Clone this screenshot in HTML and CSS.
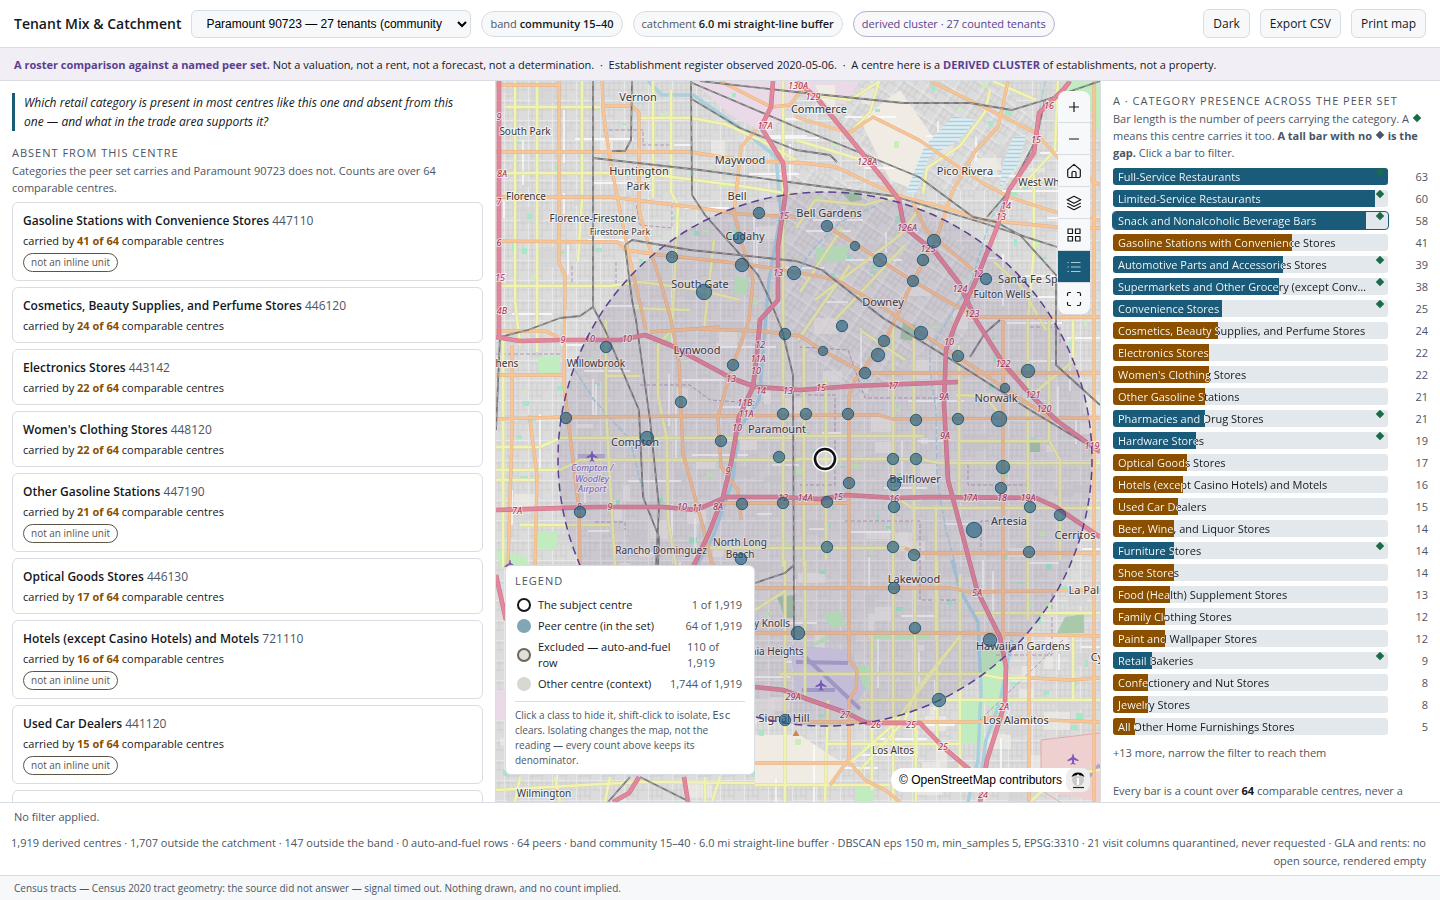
FILE: index.html
```
<!DOCTYPE html>
<html lang="en">
<head>
<meta charset="utf-8">
<title>Tenant Mix &amp; Catchment</title>
<link rel="stylesheet" href="styles.css">
</head>
<body>
<header class="topbar">
  <h1 class="title">Tenant Mix &amp; Catchment</h1>
  <select class="picker" aria-label="Subject centre"><option>Paramount 90723 — 27 tenants (community band)</option></select>
  <span class="chip">band <b>community 15–40</b></span>
  <span class="chip">catchment <b>6.0 mi straight-line buffer</b></span>
  <span class="chip chip-derived">derived cluster · 27 counted tenants</span>
  <div class="actions">
    <button class="btn" type="button">Dark</button>
    <button class="btn" type="button">Export CSV</button>
    <button class="btn" type="button">Print map</button>
  </div>
</header>
<p class="banner"><b>A roster comparison against a named peer set.</b> Not a valuation, not a rent, not a forecast, not a determination. &nbsp;·&nbsp; Establishment register observed 2020-05-06. &nbsp;·&nbsp; A centre here is a <b>DERIVED CLUSTER</b> of establishments, not a property.</p>

<main class="workspace">
  <section class="absent">
    <blockquote class="question">Which retail category is present in most centres like this one and absent from this one — and what in the trade area supports it?</blockquote>
    <h2 class="heading">ABSENT FROM THIS CENTRE</h2>
    <p class="note">Categories the peer set carries and Paramount 90723 does not. Counts are over 64 comparable centres.</p>
    <div class="cards">
      <article class="card"><h3>Gasoline Stations with Convenience Stores <span>447110</span></h3><p>carried by <b>41 of 64</b> comparable centres</p><span class="tag">not an inline unit</span></article>
      <article class="card"><h3>Cosmetics, Beauty Supplies, and Perfume Stores <span>446120</span></h3><p>carried by <b>24 of 64</b> comparable centres</p></article>
      <article class="card"><h3>Electronics Stores <span>443142</span></h3><p>carried by <b>22 of 64</b> comparable centres</p></article>
      <article class="card"><h3>Women's Clothing Stores <span>448120</span></h3><p>carried by <b>22 of 64</b> comparable centres</p></article>
      <article class="card"><h3>Other Gasoline Stations <span>447190</span></h3><p>carried by <b>21 of 64</b> comparable centres</p><span class="tag">not an inline unit</span></article>
      <article class="card"><h3>Optical Goods Stores <span>446130</span></h3><p>carried by <b>17 of 64</b> comparable centres</p></article>
      <article class="card"><h3>Hotels (except Casino Hotels) and Motels <span>721110</span></h3><p>carried by <b>16 of 64</b> comparable centres</p><span class="tag">not an inline unit</span></article>
      <article class="card"><h3>Used Car Dealers <span>441120</span></h3><p>carried by <b>15 of 64</b> comparable centres</p><span class="tag">not an inline unit</span></article>
      <article class="card"></article>
    </div>
  </section>

  <section class="map" aria-label="Map">
    <svg class="canvas" id="map" viewBox="496 81 604 721" preserveAspectRatio="xMidYMid slice"></svg>
    <div class="tools">
      <button type="button" aria-label="Zoom in"><svg viewBox="0 0 16 16"><path d="M8 3v10M3 8h10"/></svg></button>
      <button type="button" aria-label="Zoom out"><svg viewBox="0 0 16 16"><path d="M3 8h10"/></svg></button>
      <button type="button" aria-label="Home"><svg viewBox="0 0 16 16"><path d="M1.700 6.800 8 1.400l6.300 5.400V13a1.500 1.500 0 0 1-1.500 1.500H3.200A1.500 1.500 0 0 1 1.700 13zM6 14.500V9.500q0-1 1-1h2q1 0 1 1v5"/></svg></button>
      <button type="button" aria-label="Layers"><svg viewBox="0 0 16 16"><path d="M8 1.300 14.800 4.800 8 8.300 1.200 4.800zM1.200 8 8 11.500 14.800 8M1.200 11.200 8 14.700l6.800-3.500"/></svg></button>
      <button type="button" aria-label="Basemaps"><svg viewBox="0 0 16 16"><path d="M2 2h4.500v4.500H2zM9.500 2H14v4.500H9.500zM2 9.500h4.500V14H2zM9.500 9.500H14V14H9.500z"/></svg></button>
      <button type="button" aria-label="Legend" aria-pressed="true"><svg viewBox="0 0 16 16"><path d="M5 3.500h9.500M5 8h9.500M5 12.500h9.500M1.500 3.500h1.300M1.500 8h1.300M1.500 12.500h1.300"/></svg></button>
      <button type="button" aria-label="Full screen"><svg viewBox="0 0 16 16"><path d="M1.500 5V3q0-1.500 1.500-1.500h2M11 1.500h2q1.500 0 1.500 1.500v2M14.500 11v2q0 1.500-1.500 1.500h-2M5 14.500H3q-1.500 0-1.500-1.500v-2"/></svg></button>
    </div>
    <aside class="legend">
      <h2 class="heading">LEGEND</h2>
      <ul>
        <li><i class="dot subject"></i><span>The subject centre</span><em>1 of 1,919</em></li>
        <li><i class="dot peer"></i><span>Peer centre (in the set)</span><em>64 of 1,919</em></li>
        <li><i class="dot excluded"></i><span>Excluded — auto-and-fuel row</span><em class="wrap">110 of 1,919</em></li>
        <li><i class="dot other"></i><span>Other centre (context)</span><em>1,744 of 1,919</em></li>
      </ul>
      <p>Click a class to hide it, shift-click to isolate, <kbd>Esc</kbd> clears. Isolating changes the map, not the reading — every count above keeps its denominator.</p>
    </aside>
    <div class="credit"><span>© OpenStreetMap contributors</span>
      <button type="button" aria-label="Toggle attribution"><svg viewBox="0 0 24 24"><circle cx="12" cy="12" r="6" fill="#c9c9c9"/><path d="M5.500 9A7 7 0 0 1 18.500 9Q12 5 5.500 9z" fill="#000"/><path d="M12 6.500v1.800M12 10v7" stroke="#fff" stroke-width="2.200"/><path d="M7 19.500h11" stroke="#222" stroke-width="1.200"/></svg></button>
    </div>
  </section>

  <section class="presence">
    <h2 class="heading">A · CATEGORY PRESENCE ACROSS THE PEER SET</h2>
    <p class="note">Bar length is the number of peers carrying the category. A <i class="gem green"></i> means this centre carries it too. <b>A tall bar with no <i class="gem"></i> is the gap.</b> Click a bar to filter.</p>
    <ul class="bars" id="bars"></ul>
    <p class="more">+13 more, narrow the filter to reach them</p>
    <p class="foot">Every bar is a count over <b>64</b> comparable centres, never a share of sales.</p>
  </section>
</main>

<footer class="summary">
  <p>No filter applied.</p>
  <p class="facts">1,919 derived centres · 1,707 outside the catchment · 147 outside the band · 0 auto-and-fuel rows · 64 peers · band community 15–40 · 6.0 mi straight-line buffer · DBSCAN eps 150 m, min_samples 5, EPSG:3310 · 21 visit columns quarantined, never requested · GLA and rents: no open source, rendered empty</p>
</footer>
<p class="status">Census tracts — Census 2020 tract geometry: the source did not answer — signal timed out. Nothing drawn, and no count implied.</p>
<script src="app.js"></script>
</body>
</html>
```

FILE: styles.css
```
* { box-sizing: border-box; }
body {
  margin: 0; height: 100vh; display: flex; flex-direction: column; overflow: hidden;
  font: 12px/18px "Segoe UI", "Open Sans", "Noto Sans", sans-serif; color: #14181d; background: #fff;
}
h1, h2, h3, p, ul, blockquote { margin: 0; padding: 0; }
ul { list-style: none; }
b { font-weight: 600; }
button { font: inherit; color: inherit; cursor: pointer; }

.topbar { display: flex; align-items: center; gap: 10px; height: 48px; padding: 0 14px; border-bottom: 1px solid #d8dde4; flex: none; }
.title { font-size: 14px; line-height: 20px; font-weight: 600; white-space: nowrap; }
.picker { width: 280px; height: 28px; padding: 0 10px; font: 12px "Liberation Sans", Arial, sans-serif; color: #000; background: #f6f8fa; border: 1px solid #d8dde4; border-radius: 6px; }
.chip { border: 1px solid #d8dde4; border-radius: 13px; background: #f6f8fa; padding: 2px 8px; font-size: 11px; line-height: 20px; color: #4b5563; white-space: nowrap; }
.chip b { color: #14181d; }
.chip-derived { color: #5b3f8f; border-color: #b9add2; }
.actions { display: flex; gap: 10px; margin-left: auto; }
.btn { height: 29px; padding: 0 9px; background: #f6f8fa; border: 1px solid #d8dde4; border-radius: 6px; white-space: nowrap; }

.banner { flex: none; padding: 8px 14px 6px; background: #f1eef6; border-bottom: 1px solid #d8dde4; font-size: 11px; }
.banner b { color: #5b3f8f; font-weight: 700; }

.workspace { flex: 1; min-height: 0; display: grid; grid-template-columns: minmax(0, 45fr) minmax(0, 55fr) 340px; grid-template-rows: minmax(0, 1fr); }
.absent, .presence { overflow: auto; scrollbar-width: none; padding: 12px; }
.question { border-left: 3px solid #1b5b7a; padding: 0 9px; font-style: italic; line-height: 19px; margin-bottom: 13px; }
.heading { font-size: 11px; line-height: 18px; font-weight: 400; letter-spacing: 1px; color: #4b5563; }
.note, .foot, .more { font-size: 11px; line-height: 17px; color: #4b5563; }
.absent .note { margin-bottom: 6px; }
.cards { display: grid; gap: 6px; }
.card { border: 1px solid #d8dde4; border-radius: 6px; padding: 8px 10px 6px; min-height: 56px; }
.card h3 { font-size: 12px; line-height: 20px; font-weight: 600; }
.card h3 span { font-weight: 400; color: #4b5563; }
.card p { font-size: 11px; line-height: 20px; }
.card p b { color: #8a5000; font-weight: 700; }
.tag { display: block; width: max-content; margin: 2px 0; padding: 0 7px; border: 1px solid #5c5548; border-radius: 10px; font-size: 10px; line-height: 17px; color: #5c5548; }

.map { position: relative; overflow: hidden; border-left: 1px solid #d8dde4; background: #ddd; }
.canvas { display: block; width: 100%; height: 100%; }
.canvas text { font-family: "Noto Sans", sans-serif; text-anchor: middle; fill: #383838; paint-order: stroke; stroke: rgba(255, 255, 255, .65); stroke-width: 2px; }
.canvas .exit { font-size: 9px; font-style: italic; fill: #a92c45; }
.canvas .airport { font-style: italic; fill: #7c62b8; }
.tools { position: absolute; top: 10px; right: 10px; width: 32px; display: flex; flex-direction: column; gap: 1px; background: #d8dde4; border-radius: 8px; overflow: hidden; }
.tools button { height: 31px; padding: 0; border: 0; background: #f6f8fa; display: grid; place-items: center; }
.tools svg { width: 16px; height: 16px; fill: none; stroke: #14181d; stroke-width: 1.200; stroke-linejoin: round; }
.tools [aria-pressed="true"] { background: #1b5b7a; }
.tools [aria-pressed="true"] svg { stroke: #a9cddd; }
.legend { position: absolute; left: 9px; bottom: 27px; width: 250px; padding: 6px 9px; background: #fff; border: 1px solid #d8dde4; border-radius: 6px; }
.legend ul { padding: 7px 3px 9px 2px; border-bottom: 1px solid #d8dde4; display: grid; gap: 5px; }
.legend li { display: flex; align-items: center; gap: 7px; font-size: 11px; line-height: 16px; }
.legend li span { flex: 1; }
.legend em { font-style: normal; color: #4b5563; white-space: nowrap; }
.legend .wrap { white-space: normal; width: 55px; }
.legend p { font-size: 10px; line-height: 15px; color: #4b5563; padding-top: 6px; }
.legend kbd { font: 10px "DejaVu Sans Mono", monospace; }
.dot { flex: none; width: 14px; height: 14px; border-radius: 50%; }
.subject { border: 2px solid #14181d; }
.peer { background: #83a6b6; }
.excluded { background: #e1dfdc; border: 2px solid #6c655a; }
.other { background: #d8d7d2; }
.credit { position: absolute; right: 10px; bottom: 10px; height: 24px; padding-left: 8px; display: flex; align-items: center; gap: 4px; background: #fff; border-radius: 12px; font: 12px "Liberation Sans", Arial, sans-serif; color: #000; }
.credit button { width: 24px; height: 24px; padding: 0; border: 0; border-radius: 8px; background: #eee; }
.credit svg { display: block; width: 24px; height: 24px; fill: none; }

.presence { padding: 11px 12px; border-left: 1px solid #d8dde4; }
.gem { display: inline-block; width: 6px; height: 6px; margin: 2px; background: #4b5563; transform: rotate(45deg); }
.gem.green { background: #1a6b48; }
.bars { display: grid; grid-template-columns: minmax(0, 1fr); gap: 5px; margin-top: 7px; }
.bars li { display: flex; align-items: center; }
.bar { position: relative; flex: 1; min-width: 0; height: 17px; padding: 0; border: 0; border-radius: 3px; text-align: left; background: #e3e8ec; overflow: hidden; }
.bar.active { outline: 1px solid #1b5b7a; }
.fill { position: absolute; inset: 0 auto 0 0; background: #8a5000; }
.carried .fill { background: #1b5b7a; }
.bar .label { position: relative; display: block; padding: 0 20px 0 5px; font-size: 11px; line-height: 17px; white-space: nowrap; overflow: hidden; text-overflow: ellipsis; color: transparent; background-image: linear-gradient(90deg, #fff var(--w), #14181d var(--w)); background-clip: text; -webkit-background-clip: text; }
.bar .gem { position: absolute; right: 5px; top: 1px; margin: 0; background: #1a6b48; }
.count { width: 40px; text-align: right; font-size: 11px; line-height: 17px; color: #4b5563; }
.more { margin-top: 9px; }
.foot { margin-top: 21px; }
.foot b { color: #14181d; font-weight: 700; }
.note b { font-weight: 700; }

.summary { flex: none; border-top: 1px solid #d8dde4; padding: 5px 14px; font-size: 11px; color: #4b5563; }
.facts { text-align: right; margin: 8px 0 0 -12px; }
.status { flex: none; border-top: 1px solid #d8dde4; background: #f6f8fa; padding: 3px 14px; font-size: 10px; color: #4b5563; }
```

FILE: app.js
```
const rows = [
  ["Full-Service Restaurants", 63, 1], ["Limited-Service Restaurants", 60, 1], ["Snack and Nonalcoholic Beverage Bars", 58, 1],
  ["Gasoline Stations with Convenience Stores", 41, 0], ["Automotive Parts and Accessories Stores", 39, 1],
  ["Supermarkets and Other Grocery (except Convenience) Stores", 38, 1], ["Convenience Stores", 25, 1],
  ["Cosmetics, Beauty Supplies, and Perfume Stores", 24, 0], ["Electronics Stores", 22, 0], ["Women's Clothing Stores", 22, 0],
  ["Other Gasoline Stations", 21, 0], ["Pharmacies and Drug Stores", 21, 1], ["Hardware Stores", 19, 1], ["Optical Goods Stores", 17, 0],
  ["Hotels (except Casino Hotels) and Motels", 16, 0], ["Used Car Dealers", 15, 0], ["Beer, Wine, and Liquor Stores", 14, 0],
  ["Furniture Stores", 14, 1], ["Shoe Stores", 14, 0], ["Food (Health) Supplement Stores", 13, 0], ["Family Clothing Stores", 12, 0],
  ["Paint and Wallpaper Stores", 12, 0], ["Retail Bakeries", 9, 1], ["Confectionery and Nut Stores", 8, 0], ["Jewelry Stores", 8, 0],
  ["All Other Home Furnishings Stores", 5, 0]
];
document.getElementById("bars").innerHTML = rows.map(([name, n, has]) =>
  `<li><button type="button" class="bar${has ? " carried" : ""}${n === 58 ? " active" : ""}" style="--w:${(n / 63 * 100).toFixed(1)}%">` +
  `<span class="fill" style="width:${(n / 63 * 100).toFixed(1)}%"></span><span class="label">${name}</span>${has ? '<i class="gem"></i>' : ""}</button>` +
  `<span class="count">${n}</span></li>`).join("");

let seed = 7;
const rnd = () => (seed = (seed * 16807) % 2147483647) / 2147483647;
const lines = (list, color, width, extra = "") => list.map(p =>
  `<polyline points="${p}" fill="none" stroke="${color}" stroke-width="${width}" stroke-linejoin="round" ${extra}/>`).join("");
const area = (list, color) => list.map(p => `<polygon points="${p}" fill="${color}"/>`).join("");

/* Street texture: a square grid, and a tilted one for the river plain */
let out = `<defs>
<pattern id="grid" width="24" height="20" patternUnits="userSpaceOnUse"><path d="M0 3h24M0 10h24M0 16h14M4 0v20M9 3v13M14 0v20M19 0v10" stroke="#cbcbcb" stroke-width=".8" fill="none"/><path d="M0 .5h24M.5 0v20" stroke="#ebebeb" stroke-width=".8"/></pattern>
<pattern id="tilt" width="24" height="20" patternUnits="userSpaceOnUse" patternTransform="rotate(34)"><path d="M0 3h24M0 10h24M0 16h14M4 0v20M9 3v13M14 0v20M19 0v10" stroke="#c8c8c8" stroke-width=".8" fill="none"/><path d="M0 .5h24M.5 0v20" stroke="#ebebeb" stroke-width=".8"/></pattern>
<pattern id="basin" width="8" height="4" patternUnits="userSpaceOnUse"><path d="M0 1.500h8" stroke="#a5d3e2" stroke-width="1.600"/></pattern></defs>
<rect x="496" y="81" width="605" height="721" fill="#dcdcdc"/><rect x="496" y="81" width="605" height="721" fill="url(#grid)"/>`;
out += area(["776,200 800,165 900,200 985,262 960,350 930,345 860,400 800,345 775,300", "790,81 1000,81 1040,130 1010,190 890,190 850,130"], "#dcdcdc");
out += area(["776,200 800,165 900,200 985,262 960,350 930,345 860,400 800,345 775,300", "790,81 1000,81 1040,130 1010,190 890,190 850,130"], "url(#tilt)");
out += area(["693,81 860,81 845,105 796,92 770,135 730,115", "496,690 540,690 540,720 496,720"], "#ead9e6");
out += area(["860,120 900,90 935,140 915,190 890,180", "815,85 835,85 835,110 822,100", "755,735 800,735 845,765 830,785 755,785"], "#f0ece4");
for (let i = 0; i < 150; i++) {
  const x = 500 + rnd() * 590, y = 84 + rnd() * 710;
  out += `<rect x="${x.toFixed(0)}" y="${y.toFixed(0)}" width="${(6 + rnd() * 22).toFixed(0)}" height="${(4 + rnd() * 16).toFixed(0)}" fill="${rnd() > .5 ? "#f0ece6" : "#d4d4d4"}" opacity=".65"/>`;
}
for (let i = 0; i < 170; i++) {
  const x = 500 + rnd() * 595, y = 84 + rnd() * 710;
  out += `<rect x="${x.toFixed(0)}" y="${y.toFixed(0)}" width="${(2 + rnd() * 6).toFixed(0)}" height="${(2 + rnd() * 5).toFixed(0)}" fill="${rnd() > .4 ? "#a5e8c8" : "#c8efb8"}"/>`;
}
for (let i = 0; i < 130; i++) {
  const x = 500 + rnd() * 590, y = 84 + rnd() * 700, l = 14 + rnd() * 45;
  out += `<path d="M${x.toFixed(0)} ${y.toFixed(0)}${rnd() > .5 ? "h" : "v"}${l.toFixed(0)}" stroke="#fff" stroke-width="1.300"/>`;
}
out += area(["538,357 560,355 560,373 538,373", "537,532 558,532 556,550 537,550", "816,248 850,245 845,262 815,262", "735,276 749,279 746,295 734,293", "982,650 1003,650 1003,720 982,700", "961,700 983,700 983,744 961,744", "872,633 930,633 930,639 872,639", "856,665 869,665 869,690 858,690", "1062,81 1100,81 1100,140 1092,110 1075,100", "822,615 840,610 846,625 833,628", "855,785 875,790 873,802 855,802", "496,550 525,556 530,567 500,567", "806,648 822,638 830,632 826,642"], "#c1ecc0");
out += area(["1065,617 1084,614 1084,633 1057,633", "777,597 793,595 793,618 785,618", "1027,442 1040,442 1040,452 1027,452", "903,322 916,325 914,341 900,339", "840,190 860,192 862,200 850,202"], "#a9c9ab");
out += area(["1041,740 1100,733 1100,802 1041,790"], "#eed0d0") + lines(["1041,740 1100,733", "1041,740 1041,790 1060,802"], "#e5a9a9", 1);
out += area(["790,645 850,650 865,690 850,713 795,690"], "#d4d0e4") + area(["578,454 605,454 605,459 578,459"], "#b9b0d5");
out += lines(["803,655 860,709", "796,662 848,663", "802,690 835,690", "1075,790 1100,765"], "#aaa6cf", 4);
out += area(["924,147 953,116 976,120 959,140 929,157 916,193 906,193", "1013,137 1026,135 1019,163 999,190 1004,160"], "#e3edf0") + area(["924,147 953,116 976,120 959,140 929,157 916,193 906,193", "1013,137 1026,135 1019,163 999,190 1004,160"], "url(#basin)");
out += lines(["648,81 662,95 693,95 743,130 776,157 781,213 769,280 764,340 759,400 738,430 733,480 713,537 696,567", "952,560 960,590 978,622 981,690 978,760 968,802", "1012,640 1000,702 986,740 979,790"], "#a9d0de", 3.5);
out += lines(["1045,81 1030,160 990,220 972,280 945,325 930,350 930,370 936,410 937,480 946,530 956,567", "876,206 840,222 812,250 796,275", "575,370 594,400 630,440 645,500"], "#a6cede", 1.500, 'stroke-dasharray="6 2"');
out += lines(["603,130 643,130 643,145 671,145 671,190", "636,205 640,225 672,228 672,205", "496,354 560,354", "640,385 690,385 710,400 740,402", "800,347 848,350 865,398 940,398", "796,395 835,395 835,485 800,485", "845,521 920,521 920,600 960,600", "1030,327 1060,327 1060,345", "968,464 968,485 1028,485 1028,521 981,521 981,550", "595,522 625,522 625,530", "996,655 1052,655 1052,590", "1063,640 980,720", "616,262 616,286 572,286 572,265"], "#b597b9", 1, 'stroke-dasharray="4 2"');

const yellow = ["515,81 515,300 520,345", "537,81 537,352", "582,81 582,200 578,262", "653,81 653,198", "671,90 671,192 678,205 672,330 658,345 658,395 667,440 668,520 676,567", "505,107 600,107", "640,118 690,118 725,124 760,140 796,160", "496,173 640,173 680,178 740,186 796,195", "501,286 610,286 640,282 700,290 740,300", "635,308 690,310", "714,240 704,330",
  "606,320 606,410 610,480 615,567", "503,340 503,567", "606,376 640,376", "496,447 540,447 560,438 796,438", "496,470 560,470 580,460 800,460", "496,480 540,480", "520,525 610,525", "705,548 800,548", "783,81 783,567", "804,345 804,567", "826,380 826,560", "893,320 893,802", "914,335 914,450 916,802", "959,345 959,420 959,500", "796,436 924,436", "796,459 920,459 940,463 1100,463", "959,441 1048,441", "896,497 912,508 1100,508", "796,548 905,548", "936,508 936,640", "1028,320 1028,620", "1049,320 1049,440 1060,460 1060,560", "1073,320 1073,358",
  "785,560 785,802", "805,560 805,700", "828,700 825,802", "872,635 872,790", "937,560 937,750", "960,575 960,770", "1073,635 1073,700", "755,610 785,591", "975,613 1100,613", "780,674 980,674 1000,678 1028,678", "860,700 1100,700", "825,744 960,744", "755,785 890,785", "850,763 893,725 960,636", "960,636 916,690 905,720 860,770", "1030,802 1060,775 1100,770",
  "496,790 640,782 755,783", "520,777 515,802", "555,777 560,802", "610,777 605,802", "705,777 705,802", "720,777 712,802",
  "800,92 850,100 880,81", "846,137 870,112 879,81", "796,140 862,160", "993,81 1036,100", "923,193 927,168 960,146 985,112 990,90", "796,228 815,200 865,205 900,195", "800,292 842,228", "815,300 900,235 922,205", "835,320 905,245", "798,340 850,265", "860,330 905,360", "994,262 1020,285 1046,330", "1020,188 1055,150 1058,81", "1034,175 1034,250 1028,320", "956,395 985,396 1003,419", "1028,398 1050,380 1075,360"];
const orange = ["496,85 559,85", "559,81 559,263 565,275 564,385 579,510 580,567", "496,152 690,152 742,160 800,163", "496,197 610,197 700,208 740,214 796,217", "499,241 618,242 625,250 652,254 745,264 796,272 836,280 883,307 921,333 978,370 1022,400 1056,420", "602,81 603,110 610,160 620,210 630,260 646,330", "603,106 632,106 639,113 639,210 650,250 660,280 671,320 679,363 683,453 703,527 713,567", "756,130 741,147 734,213 743,247 753,280 749,320 729,377 718,417 721,467 738,490 741,520",
  "496,331 545,331 558,337", "700,329 760,331 785,334 800,336 823,351 865,373 1100,373", "496,375 564,375", "512,345 512,435 508,567", "530,420 537,475 535,567", "496,419 566,417 860,415 878,415 893,419 1100,418", "650,332 720,327", "720,503 848,503", "849,395 849,660 857,670 856,690 849,700 849,760", "905,548 915,553 1100,553", "1003,320 1003,640", "755,588 950,588 970,592 1100,590", "755,633 960,633 1100,636", "1029,635 1029,802", "1030,678 1070,680 1100,678", "800,722 980,722 990,718 1100,722", "755,763 850,763 865,780 885,790 900,802", "1094,81 1094,802", "848,760 830,785",
  "720,81 771,107 790,105 805,85", "796,117 849,133 873,117 919,140 983,183 1009,197 1058,213 1100,220", "796,162 836,167 870,183 903,197 943,207 983,220 1057,227 1100,228", "930,81 996,113 1036,133 1060,160 1100,185", "1008,81 998,127 976,150 953,190 936,240 913,281 885,341 855,380 849,395", "827,226 880,260 913,281 963,310 973,317 1100,317", "913,203 926,230 973,270"];
out += lines(yellow, "#d6d8a2", 3.300) + lines(yellow, "#f1f3b0", 2.500);
out += lines(orange, "#e4b08a", 3.300) + lines(orange, "#f8c594", 2.400);
const rail = ["593,81 593,307 580,316 560,318 528,330 500,337 496,430", "593,307 605,330 639,410 643,497 659,537 658,567", "632,81 631,140 625,151 612,151", "593,158 700,170 796,183 893,196 983,223 1057,247", "691,81 692,195 705,215 745,260 758,275 770,300 782,330 793,375 794,640", "690,82 796,127 846,147 919,177 973,217 996,222 1020,235 1056,275 1056,365 1100,405", "690,98 740,128 796,150 830,155 837,162", "625,245 632,240 690,250 796,261 822,270 883,318 960,365 1030,410 1100,452", "625,245 632,300 636,320 650,420 659,507 656,567", "700,81 796,92 903,103 970,103 1012,110 1045,100 1100,81", "1045,100 1036,140 1010,190 987,217", "970,357 985,333 1000,320", "755,583 785,573 794,565", "630,777 608,802", "640,777 686,800"];
out += lines(rail, "#787878", 1.800) + lines(rail, "#aaa", 1, 'stroke-dasharray="5 5"');
const motorway = ["499,81 499,340", "773,81 771,107 761,127 783,163 786,190 778,247 778,300 760,320 757,353 753,387 739,417 731,463 723,497 709,533 693,567", "796,81 816,97 849,137 884,180 899,200 904,227 936,253 959,283 976,320 1003,363 1029,393 1056,420 1100,452", "1070,81 1063,90 1039,113 1034,153 1009,190 996,230 976,280 956,323 946,350 944,403 948,480 956,510 977,590 1000,637 1006,667 1005,703 987,760 980,802", "496,337 520,341 560,340 620,340 645,335 670,345 731,378 756,387 800,390 853,386 958,382", "496,510 596,507 663,507 696,510 726,497 776,497 820,499 846,495 896,498 929,497 1036,498 1056,507 1100,537", "755,687 783,690 810,700 847,713 867,723 920,723 943,747 970,770", "639,777 629,793 613,802", "684,777 688,802", "496,575 506,620"];
out += lines(motorway, "#cf7388", 4.600) + lines(motorway, "#e2889c", 3.400);

const towns = [["Vernon",638,101,11],["Commerce",819,113,11],["South Park",525,135,10],["Maywood",740,164,11],["Huntington",639,175,11],["Park",638,190,11],["Pico Rivera",965,175,11],["West Whittier",1050,186,10],["Florence",526,200,10],["Bell",737,200,11],["Florence-Firestone",593,222,10],["Firestone Park",620,235,9],["Bell Gardens",829,217,11],["Cudahy",745,240,11],["South Gate",700,288,11],["Santa Fe Springs",1041,283,11],["Fulton Wells",1002,298,10],["Downey",883,306,11],["Lynwood",697,354,11],["Willowbrook",596,367,10],["hens",507,367,10],["Norwalk",996,402,11],["Paramount",777,433,11],["Compton",635,446,11],["Bellflower",915,483,11],["Artesia",1009,525,11],["Cerritos",1075,539,11],["Rancho Dominguez",661,554,10],["North Long",740,546,10],["Beach",740,558,10],["Lakewood",914,583,11],["La Palma",1092,594,11],["y Knolls",772,627,10],["nia Heights",777,655,10],["Hawaiian Gardens",1023,650,11],["Cypress",1111,661,11],["Los Alamitos",1016,724,11],["Signal Hill",784,722,11],["Los Altos",893,754,10],["Wilmington",544,797,10]];
out += towns.map(([t, x, y, s]) => `<text x="${x}" y="${y}" font-size="${s}">${t}</text>`).join("");
const exits = [["130A",798,89],["129",813,100],["17A",765,129],["128A",867,165],["126A",907,231],["125",928,252],["124",960,292],["123",972,317],["12",978,277],["16",1049,109],["15",1036,143],["14",1006,209],["13",1001,220],["15",784,219],["13",778,276],["9",499,120],["7",499,205],["6",499,246],["15",500,281],["4B",502,314],["8A",502,177],["9",563,343],["10",590,342],["10",627,342],["12",760,348],["11A",758,362],["10",756,374],["13",731,382],["14",761,394],["13",788,394],["11B:",746,406],["11A",746,417],["10",737,431],["9",728,474],["15",821,391],["17",893,389],["10",949,345],["9A",944,400],["9A",945,439],["122",1003,367],["121",1033,398],["120",1044,412],["119",1092,449],["7A",517,514],["8",579,510],["9",610,510],["10",682,510],["11",697,511],["8A",718,510],["12",783,501],["14A",805,501],["15",838,500],["16",894,502],["17A",970,501],["18",1002,501],["19A",1028,501],["5A",977,596],["2A",1004,710],["29A",793,700],["27",845,718],["26",876,728],["25",911,728],["25",943,750],["24",983,798]];
out += exits.map(([t, x, y]) => `<text class="exit" x="${x}" y="${y}">${t}</text>`).join("");
out += [["Compton /",592,471],["Woodley",592,482],["Airport",592,492]].map(([t, x, y]) => `<text class="airport" font-size="9" x="${x}" y="${y}">${t}</text>`).join("");
out += [[592,456],[821,685],[1073,759],[510,565]].map(([x, y]) => `<path transform="translate(${x} ${y})" d="M0-5.500q1 1 1 3.500l4.500 3v1.200L1 1v2.800l1.500 1.200v.8L0 5l-2.500.8V5L-1 3.800V1l-4.500 1.200V1L-1-2q0-2.500 1-3.500z" fill="#7c5cc0"/>`).join("");
out += `<path d="M796 730l3.500 6h-7z" fill="#cf8550"/>`;

/* Catchment buffer, peers and the subject centre */
out += `<circle cx="825" cy="459" r="267" fill="#513c7c" fill-opacity=".12" stroke="#5b3f8f" stroke-width="1.500" stroke-dasharray="8 5"/>`;
const peers = [[759,213],[827,226],[855,246,5],[934,241,7],[923,260],[880,260,7],[739,238],[672,257],[742,265,7],[794,273,7],[913,281],[704,292,8],[986,279],[842,326],[921,333,7],[785,334],[884,341],[823,351,5],[878,355,7],[958,356],[606,347],[733,365],[865,373],[1028,371,7],[1005,388,5],[681,402],[566,418],[647,438,7],[721,441],[783,414],[806,414],[848,414],[916,420],[958,419],[999,419,8],[779,457],[893,459],[916,459],[1003,467,7],[894,484,7],[849,483],[1001,488],[742,504],[783,503],[827,502],[894,507],[1030,507],[1060,515],[580,512],[974,530,8],[1029,552],[827,547],[893,547],[914,555],[741,559],[894,588],[915,628],[798,633,7],[990,640,7],[939,700,7],[785,720]];
out += peers.map(([x, y, r = 6]) => `<circle cx="${x}" cy="${y}" r="${r - .3}" fill="#1b5b7a" fill-opacity=".62" stroke="#174d68" stroke-opacity=".8"/>`).join("");
out += `<circle cx="825" cy="459" r="10" fill="none" stroke="#fff" stroke-width="5.500"/><circle cx="825" cy="459" r="10" fill="#fff" fill-opacity=".25" stroke="#101418" stroke-width="2.600"/>`;
document.getElementById("map").innerHTML = out;
```
